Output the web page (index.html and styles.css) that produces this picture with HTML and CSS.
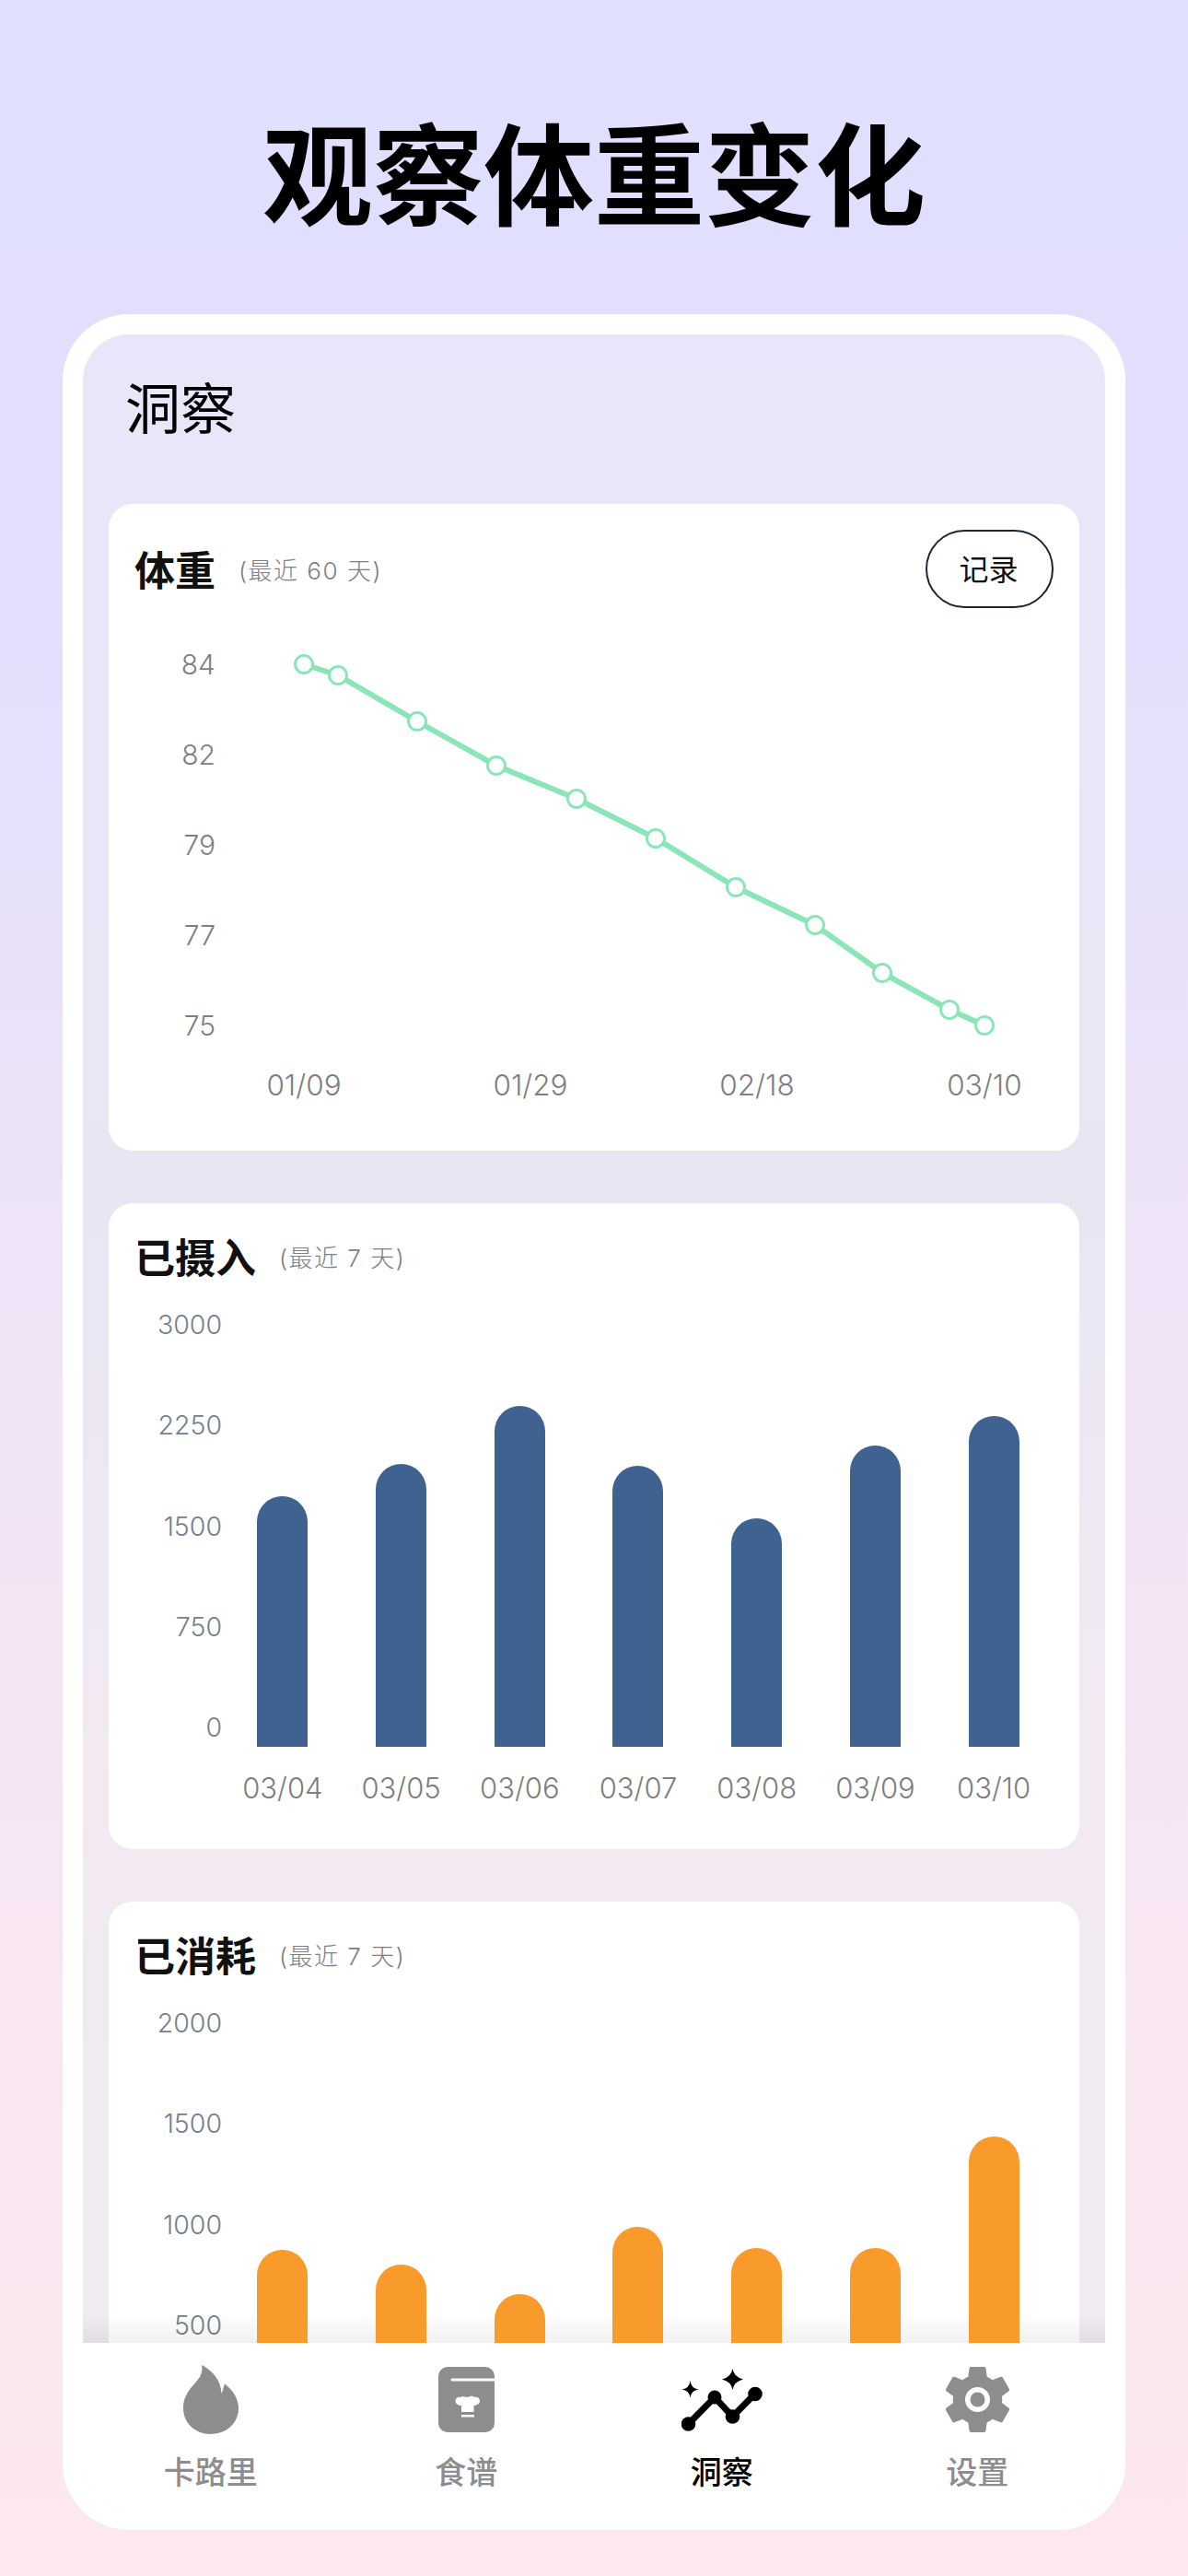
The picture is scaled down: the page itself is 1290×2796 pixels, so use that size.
FILE: index.html
```html
<!DOCTYPE html>
<html lang="zh-CN">
<head>
    <meta charset="UTF-8">
    <meta name="viewport" content="width=device-width, initial-scale=1.0">
    <title>观察体重变化</title>
    <link rel="stylesheet" href="styles.css">
</head>
<body>
    <h1 class="headline">观察体重变化</h1>
    <div class="phone">
        <div class="screen">
            <div class="page-title">洞察</div>
            <div class="scroll">
                <section class="card card-weight">
                    <div class="card-head">
                        <span class="card-title">体重</span>
                        <span class="card-sub">(最近 60 天)</span>
                        <button class="record-btn">记录</button>
                    </div>
                    <svg class="line-chart" width="1053" height="589" viewBox="0 0 1053 589">
                        <g class="axis-text axis-y" text-anchor="end">
                            <text x="116" y="61">84</text>
                            <text x="116" y="159">82</text>
                            <text x="116" y="257">79</text>
                            <text x="116" y="355">77</text>
                            <text x="116" y="453">75</text>
                        </g>
                        <g class="axis-text axis-x" text-anchor="middle">
                            <text x="212" y="517">01/09</text>
                            <text x="458" y="517">01/29</text>
                            <text x="704" y="517">02/18</text>
                            <text x="951" y="517">03/10</text>
                        </g>
                        <polyline class="trend" points="212,61 249,73 335,123 421,171 508,207 594,250 681,303 767,344 840,396 913,436 951,453"/>
                        <g class="dots">
                            <circle cx="212" cy="61" r="9.500"/>
                            <circle cx="249" cy="73" r="9.500"/>
                            <circle cx="335" cy="123" r="9.500"/>
                            <circle cx="421" cy="171" r="9.500"/>
                            <circle cx="508" cy="207" r="9.500"/>
                            <circle cx="594" cy="250" r="9.500"/>
                            <circle cx="681" cy="303" r="9.500"/>
                            <circle cx="767" cy="344" r="9.500"/>
                            <circle cx="840" cy="396" r="9.500"/>
                            <circle cx="913" cy="436" r="9.500"/>
                            <circle cx="951" cy="453" r="9.500"/>
                        </g>
                    </svg>
                </section>

                <section class="card">
                    <div class="card-head">
                        <span class="card-title">已摄入</span>
                        <span class="card-sub">(最近 7 天)</span>
                    </div>
                    <div class="bar-chart">
                        <div class="y-axis">
                            <span>3000</span>
                            <span>2250</span>
                            <span>1500</span>
                            <span>750</span>
                            <span>0</span>
                        </div>
                        <div class="plot">
                            <div class="bar bar-blue" style="height: 272px"></div>
                            <div class="bar bar-blue" style="height: 307px"></div>
                            <div class="bar bar-blue" style="height: 370px"></div>
                            <div class="bar bar-blue" style="height: 305px"></div>
                            <div class="bar bar-blue" style="height: 248px"></div>
                            <div class="bar bar-blue" style="height: 327px"></div>
                            <div class="bar bar-blue" style="height: 359px"></div>
                        </div>
                        <div class="x-axis">
                            <span>03/04</span>
                            <span>03/05</span>
                            <span>03/06</span>
                            <span>03/07</span>
                            <span>03/08</span>
                            <span>03/09</span>
                            <span>03/10</span>
                        </div>
                    </div>
                </section>

                <section class="card">
                    <div class="card-head">
                        <span class="card-title">已消耗</span>
                        <span class="card-sub">(最近 7 天)</span>
                    </div>
                    <div class="bar-chart">
                        <div class="y-axis">
                            <span>2000</span>
                            <span>1500</span>
                            <span>1000</span>
                            <span>500</span>
                        </div>
                        <div class="plot">
                            <div class="bar bar-orange" style="height: 212px"></div>
                            <div class="bar bar-orange" style="height: 196px"></div>
                            <div class="bar bar-orange" style="height: 164px"></div>
                            <div class="bar bar-orange" style="height: 237px"></div>
                            <div class="bar bar-orange" style="height: 214px"></div>
                            <div class="bar bar-orange" style="height: 214px"></div>
                            <div class="bar bar-orange" style="height: 335px"></div>
                        </div>
                    </div>
                </section>
            </div>
            <nav class="tabbar">
                <div class="tab">
                    <div class="tab-icon">
                        <svg width="60" height="75" viewBox="0 0 60 75">
                            <path fill="#8e8c8d" d="M20 0C32 6 41 17 41.5 31C43 28 43.5 24 45 20.5C54 27 60 37 60 47C60 63 47 75 30 75C13 75 0 63 0 47C0 30 12 22 18 13C20 9 21 4 20 0Z"/>
                        </svg>
                    </div>
                    <span>卡路里</span>
                </div>
                <div class="tab">
                    <div class="tab-icon">
                        <svg width="61" height="71" viewBox="0 0 61 71">
                            <rect width="61" height="71" rx="10" fill="#8e8c8d"/>
                            <path fill="#fff" d="M15 12.500H61V15.500H15A1.500 1.500 0 0 1 15 12.500Z"/>
                            <path fill="#fff" d="M25 49V42C21 42 18.500 39.500 18.500 37C18.500 34 21.500 32 24.500 33C26 31 28 33 32 33C35 32 37 31 39.500 33C42.500 32 45 34 45 37C45 39.500 42 42 38.500 42V49Z"/>
                            <rect x="25" y="52" width="14" height="2.500" fill="#fff"/>
                        </svg>
                    </div>
                    <span>食谱</span>
                </div>
                <div class="tab tab-active">
                    <div class="tab-icon">
                        <svg width="88" height="68" viewBox="0 0 88 68">
                            <polyline fill="none" stroke="#000" stroke-width="7" points="7.500,60 36,31 55.500,52 80,27"/>
                            <circle cx="7.500" cy="60" r="7.800"/>
                            <circle cx="36" cy="31" r="7.500"/>
                            <circle cx="55.500" cy="52" r="7.800"/>
                            <circle cx="80" cy="27.500" r="7.800"/>
                            <path d="M55.500 0Q57 9 67 11.500Q57 14 55.500 23Q54 14 44 11.500Q54 9 55.500 0Z"/>
                            <path d="M9.500 13Q10.500 21.500 18.500 22.500Q10.500 23.500 9.500 31.500Q8.500 23.500 0.500 22.500Q8.500 21.500 9.500 13Z"/>
                        </svg>
                    </div>
                    <span>洞察</span>
                </div>
                <div class="tab">
                    <div class="tab-icon">
                        <svg width="69" height="73" viewBox="2.700 2.400 18.600 19.200">
                            <path fill="#8e8c8d" d="M19.140,12.940c0.040-0.300,0.060-0.610,0.060-0.940c0-0.320-0.020-0.640-0.070-0.940l2.030-1.580c0.180-0.140,0.230-0.410,0.120-0.610l-1.920-3.320c-0.120-0.220-0.370-0.290-0.590-0.220l-2.390,0.960c-0.500-0.380-1.030-0.700-1.620-0.940L14.400,2.810c-0.040-0.240-0.240-0.410-0.480-0.410h-3.840c-0.240,0-0.430,0.170-0.470,0.410L9.250,5.350C8.660,5.590,8.120,5.920,7.630,6.290L5.240,5.330c-0.220-0.080-0.470,0-0.590,0.220L2.740,8.870C2.620,9.080,2.660,9.340,2.860,9.480l2.030,1.580C4.840,11.360,4.800,11.690,4.800,12s0.020,0.640,0.070,0.940l-2.030,1.580c-0.180,0.140-0.230,0.410-0.120,0.610l1.920,3.320c0.120,0.220,0.370,0.290,0.590,0.220l2.390-0.960c0.500,0.380,1.030,0.700,1.620,0.940l0.360,2.540c0.050,0.240,0.240,0.410,0.480,0.410h3.840c0.240,0,0.440-0.170,0.470-0.410l0.360-2.540c0.590-0.240,1.130-0.560,1.620-0.940l2.390,0.960c0.220,0.080,0.470,0,0.590-0.220l1.920-3.320c0.120-0.220,0.070-0.470-0.120-0.610L19.140,12.940z"/>
                            <circle cx="12" cy="12" r="2.900" fill="none" stroke="#fff" stroke-width="1.500"/>
                        </svg>
                    </div>
                    <span>设置</span>
                </div>
            </nav>
        </div>
    </div>
</body>
</html>
```

FILE: styles.css
```css
html, body {
    margin: 0;
    padding: 0;
}
body {
    width: 1290px;
    height: 2796px;
    overflow: hidden;
    font-family: Inter, 'Noto Sans CJK SC', sans-serif;
    background: linear-gradient(180deg, #e1dfff 0%, #e3dffc 25%, #ede3f8 45%, #f6e5f3 70%, #fde8ee 100%);
}
.headline {
    margin: 124px 0 97px;
    font-family: 'Noto Sans CJK SC', sans-serif;
    font-size: 120px;
    line-height: 120px;
    font-weight: 700;
    color: #000;
    text-align: center;
}
.phone {
    width: 1110px;
    height: 2361px;
    margin: 0 68px;
    padding: 22px;
    background-color: #fff;
    border-radius: 72px;
}
.screen {
    height: 100%;
    display: flex;
    flex-direction: column;
    border-radius: 50px;
    overflow: hidden;
    background: linear-gradient(180deg, #e8e6fa 0%, #e9e6f4 40%, #f2e9f2 65%, #f1ebf0 100%);
}
.page-title {
    flex: none;
    height: 184px;
    padding: 53px 0 0 46px;
    box-sizing: border-box;
    font-family: 'Noto Sans CJK SC', sans-serif;
    font-size: 60px;
    font-weight: 400;
    line-height: 48px;
    color: #000;
}
.scroll {
    flex: 1;
    min-height: 0;
    position: relative;
    overflow: hidden;
    padding: 0 28px;
    display: flex;
    flex-direction: column;
    gap: 57px;
}
/* shadow the tab bar throws up on the list */
.scroll::after {
    content: '';
    position: absolute;
    left: 0;
    right: 0;
    bottom: 0;
    height: 32px;
    background: linear-gradient(180deg, rgba(0, 0, 0, 0) 0%, rgba(0, 0, 0, 0.06) 100%);
}
.card {
    flex: none;
    height: 701px;
    background-color: #fff;
    border-radius: 26px;
}
.card-weight {
    height: 702px;
}
.card-head {
    display: flex;
    align-items: center;
    height: 46px;
    padding: 34px 28px 0;
    font-family: Inter, 'Noto Sans CJK SC', sans-serif;
}
.card-weight .card-head {
    height: 85px;
    padding: 28px 28px 0;
}
.card-title {
    font-family: 'Noto Sans CJK SC', sans-serif;
    font-size: 44px;
    font-weight: 700;
    color: #111;
}
.card-weight .card-title {
    margin-top: -2px;
}
.card-sub {
    margin-left: 25px;
    font-size: 26px;
    font-weight: 300;
    letter-spacing: 1.5px;
    color: #808080;
}
.record-btn {
    margin-left: auto;
    width: 139px;
    height: 85px;
    padding: 0 2px 4px 0;
    background-color: #fff;
    border: 2.5px solid #1c2630;
    border-radius: 43px;
    font-family: 'Noto Sans CJK SC', sans-serif;
    font-size: 32px;
    color: #111;
}
.line-chart {
    display: block;
}
.axis-text text {
    font-family: Inter, sans-serif;
    font-weight: 300;
    fill: #7f7f7f;
    dominant-baseline: central;
}
.axis-y text {
    font-size: 30px;
}
.axis-x text {
    font-size: 31.5px;
}
.trend {
    fill: none;
    stroke: #8be6b7;
    stroke-width: 6;
}
.dots circle {
    fill: #fff;
    stroke: #8be6b7;
    stroke-width: 3;
}
.bar-chart {
    display: grid;
    grid-template-columns: 124.5px 901px;
    margin-top: 32px;
    font-size: 28.5px;
    font-weight: 300;
    line-height: 40px;
    color: #76808c;
}
.y-axis {
    height: 477px;
    display: flex;
    flex-direction: column;
    gap: 69.25px;
    align-items: flex-end;
    padding-right: 1.5px;
    box-sizing: border-box;
}
.plot {
    position: relative;
    z-index: 1;
    height: 478px;
    display: grid;
    grid-template-columns: repeat(7, 1fr);
    align-items: end;
    justify-items: center;
}
.bar {
    width: 55px;
    border-radius: 28px 28px 0 0;
}
.bar-blue {
    background-color: #3f6291;
}
.bar-orange {
    background-color: #f99b2b;
}
.x-axis {
    grid-column: 2;
    margin-top: 25px;
    display: grid;
    grid-template-columns: repeat(7, 1fr);
    justify-items: center;
    font-size: 31px;
    color: #7f7f7f;
}
.tabbar {
    flex: none;
    height: 181px;
    display: grid;
    grid-template-columns: repeat(4, 1fr);
    background-color: #fff;
}
.tab {
    display: flex;
    flex-direction: column;
    align-items: center;
    padding-top: 24px;
    font-family: 'Noto Sans CJK SC', sans-serif;
    font-size: 34px;
    font-weight: 500;
    line-height: 40px;
    color: #8e8c8d;
}
.tab-active {
    color: #000;
}
.tab-icon {
    height: 75px;
    margin-bottom: 20px;
    display: flex;
    align-items: center;
    justify-content: center;
}
.tab-icon svg {
    display: block;
}
```
